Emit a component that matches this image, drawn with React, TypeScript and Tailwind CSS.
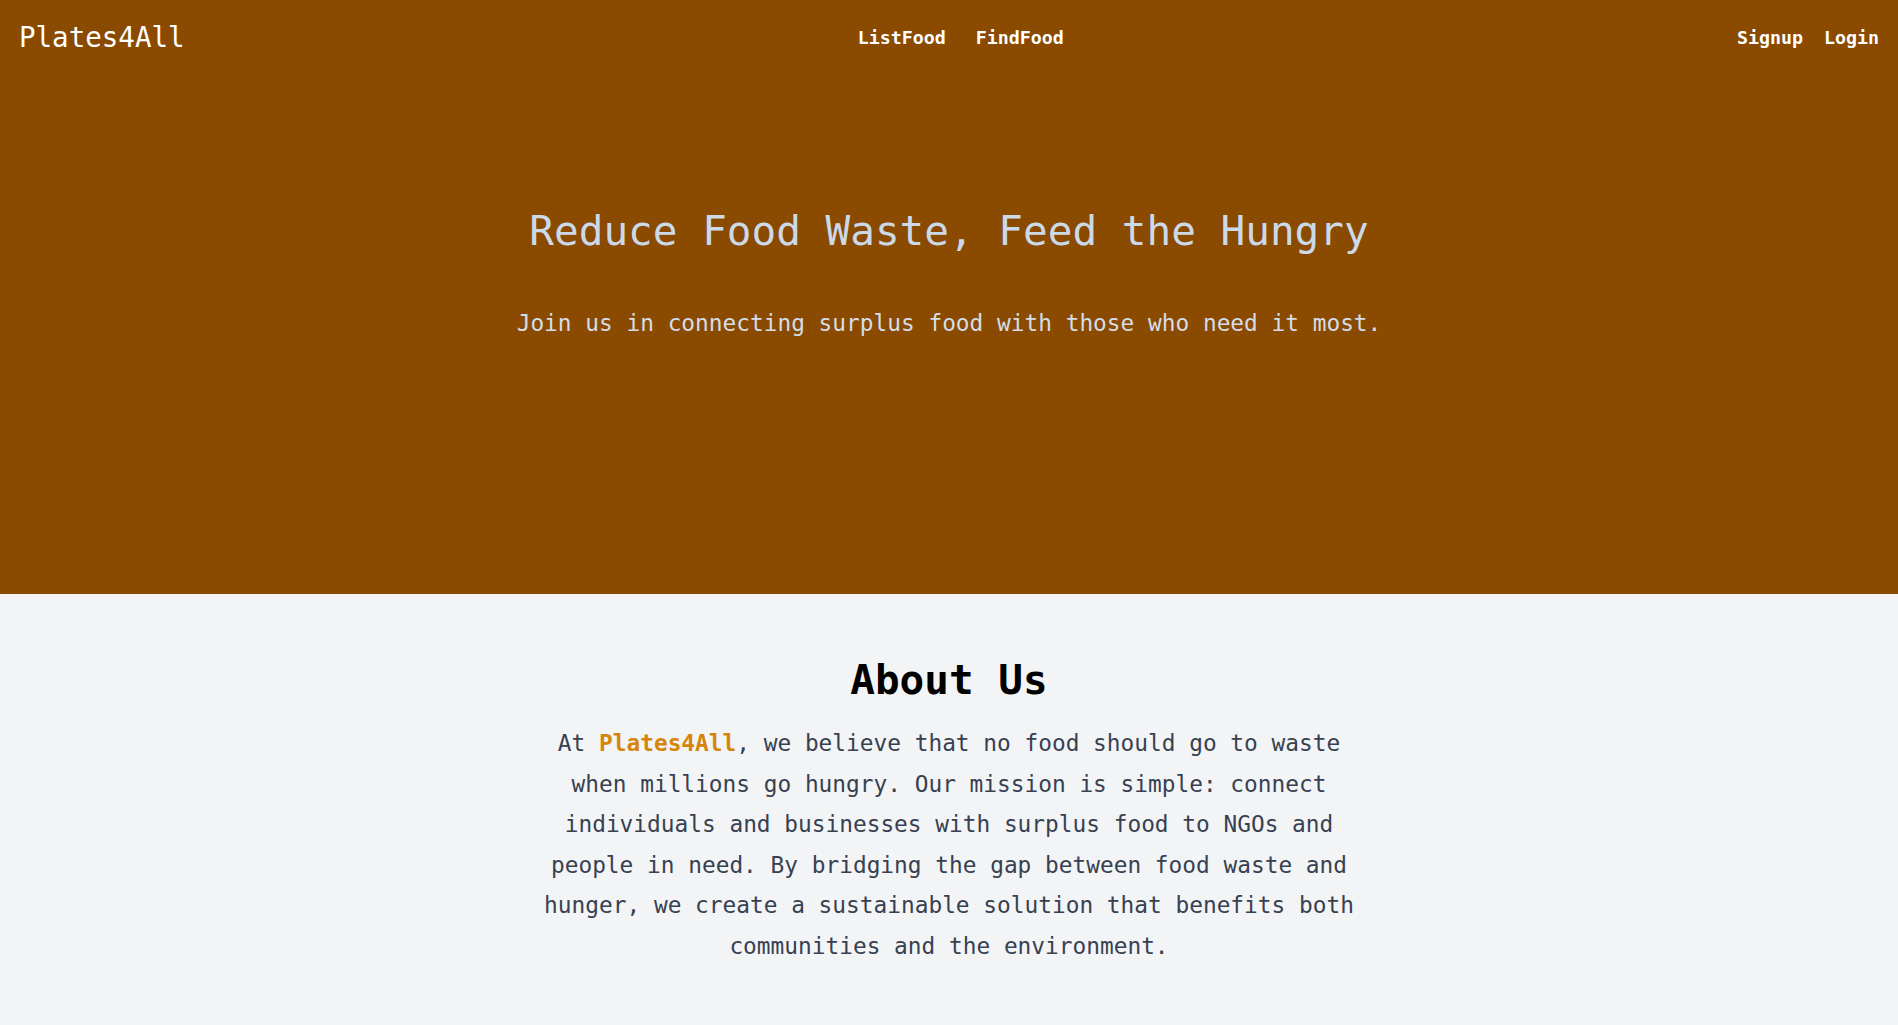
const mono = { fontFamily: '"DejaVu Sans Mono", "Liberation Mono", monospace' };

const App = () => {
    return (
        <div className="min-h-screen bg-[#f3f4f6]" style={mono}>
            {/* Hero */}
            <div className="bg-[#8a4a00] h-[594px]">
                <nav className="flex items-center justify-between h-[75px] px-[19px]">
                    <a className="text-[27.5px] text-white leading-none">Plates4All</a>
                    <div className="flex gap-[30px] text-[18.3px] font-bold text-white">
                        <a>ListFood</a>
                        <a>FindFood</a>
                    </div>
                    <div className="flex gap-[21px] text-[18.3px] font-bold text-white">
                        <a>Signup</a>
                        <a>Login</a>
                    </div>
                </nav>
                <div className="text-center pt-[132px]">
                    <h1 className="text-[41px] leading-[48px] text-[#cbd9e8]">Reduce Food Waste, Feed the Hungry</h1>
                    <p className="mt-[52px] text-[22.8px] leading-[32px] text-[#d4dde8]">
                        Join us in connecting surplus food with those who need it most.
                    </p>
                </div>
            </div>

            {/* About */}
            <div className="pt-[62px] pb-[59px] text-center">
                <h2 className="text-[41px] leading-[48px] font-bold text-black mb-[19px]">About Us</h2>
                <p className="max-w-[840px] mx-auto text-[22.8px] leading-[40.6px] text-[#374151]">
                    At <span className="font-bold text-[#d58609]">Plates4All</span>, we believe that no food should go to waste when millions go hungry. Our mission is simple: connect individuals and businesses with surplus food to NGOs and people in need. By bridging the gap between food waste and hunger, we create a sustainable solution that benefits both communities and the environment.
                </p>
            </div>
        </div>
    );
};

export default App;
